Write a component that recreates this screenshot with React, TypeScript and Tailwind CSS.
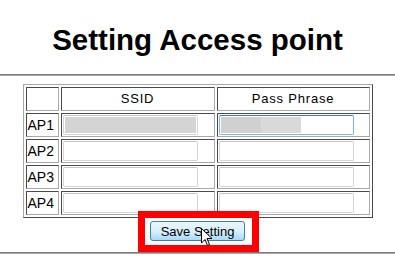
import React from 'react'

const cell =
  'border border-solid border-t-[#4a4a4a] border-l-[#4a4a4a] border-r-[#a8a8a8] border-b-[#a8a8a8] p-[1px]'

function Field({ focus, fill }: { focus?: boolean; fill?: 'full' | 'half' }) {
  return (
    <div
      className={
        'w-[135px] h-[20px] rounded-[2px] border p-[1px] bg-white ' +
        (focus
          ? 'border-[#7eb4ea] border-t-[#3d7bad]'
          : 'border-[#d5d5d5] border-t-[#c4c4c4]')
      }
    >
      {fill === 'full' && <div className="h-full w-full bg-[#d4d4d4]" />}
      {fill === 'half' && (
        <div className="flex h-full">
          <div className="w-[40px] bg-[#d0d0d0]" />
          <div className="w-[40px] bg-[#d9d9d9]" />
        </div>
      )}
    </div>
  )
}

export default function App() {
  const rows = ['AP1', 'AP2', 'AP3', 'AP4']

  return (
    <div className="w-[395px] h-[280px] bg-white overflow-hidden font-['Liberation_Sans',Arial,sans-serif] text-black">
      <h1 className="pt-[25px] text-center text-[29.5px] leading-[29px] font-bold">
        Setting Access point
      </h1>
      <div className="mt-[20px] h-[2px] border-t border-t-[#7a7a7a] border-b border-b-[#a9a9a9]" />

      <div className="flex justify-center mt-[8px]">
        <table className="table-fixed w-[350px] border-separate border-spacing-[2px] border border-solid border-t-[#a8a8a8] border-l-[#a8a8a8] border-r-[#4a4a4a] border-b-[#4a4a4a]">
          <thead>
            <tr>
              <th className={cell + ' w-[33px] h-[22px]'} />
              <th className={cell + ' w-[154px] h-[22px] text-[13px] font-normal tracking-[0.8px]'}>SSID</th>
              <th className={cell + ' w-[153px] h-[22px] text-[13px] font-normal tracking-[0.8px]'}>Pass Phrase</th>
            </tr>
          </thead>
          <tbody>
            {rows.map((r, i) => (
              <tr key={r}>
                <td className={cell + ' h-[24px] text-[14px] leading-none text-left'}>{r}</td>
                <td className={cell + ' h-[24px]'}>
                  <Field fill={i === 0 ? 'full' : undefined} />
                </td>
                <td className={cell + ' h-[24px]'}>
                  <Field focus={i === 0} fill={i === 0 ? 'half' : undefined} />
                </td>
              </tr>
            ))}
          </tbody>
        </table>
      </div>

      <div className="flex justify-center pt-[1px]">
        <div className="relative">
          <button className="w-[95px] h-[20px] rounded-[3px] border border-[#3c7fb1] bg-gradient-to-b from-[#eaf6fd] via-[#d9f0fc] to-[#a7d9f5] text-[13px] leading-none">
            Save Setting
          </button>
          <span className="absolute left-[-12px] right-[-14px] top-[-8px] bottom-[-9px] border-[7px] border-[#ff0000] pointer-events-none" />
          <svg
            className="absolute left-[51px] top-[9px]"
            width="12"
            height="19"
            viewBox="0 0 12 19"
          >
            <path
              d="M0.5 0.5 L0.5 15 L4 11.5 L6.5 17.5 L8.5 16.5 L6 10.5 L11 10.5 Z"
              fill="white"
              stroke="black"
              strokeWidth="1"
              strokeLinejoin="miter"
            />
          </svg>
        </div>
      </div>

      <div className="mt-[9px] h-[2px] border-t border-t-[#7a7a7a] border-b border-b-[#a9a9a9]" />
    </div>
  )
}
